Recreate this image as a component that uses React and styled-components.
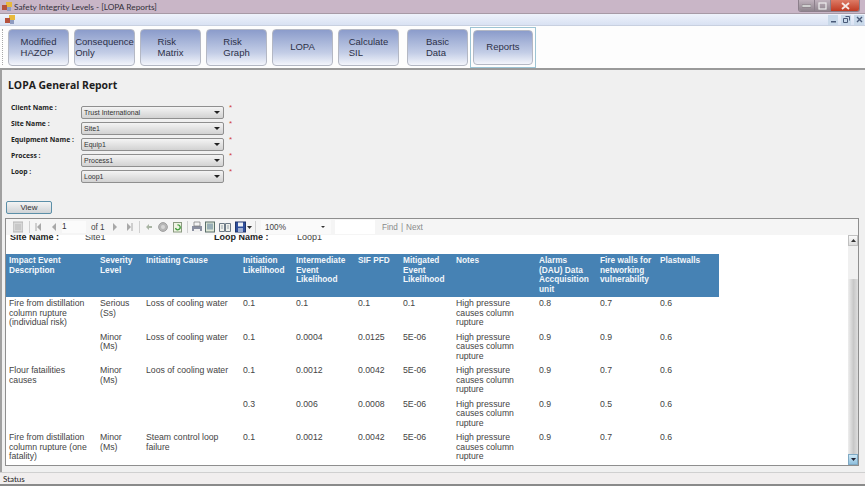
import React from 'react'
import styled, { createGlobalStyle } from 'styled-components'

const GlobalStyle = createGlobalStyle`
  html, body { margin: 0; padding: 0; background: #f0f0f0; }
  * { box-sizing: border-box; }
`

const navButtons = [
  { label: ['Modified', 'HAZOP'] },
  { label: ['Consequence', 'Only'] },
  { label: ['Risk', 'Matrix'] },
  { label: ['Risk', 'Graph'] },
  { label: ['LOPA'] },
  { label: ['Calculate', 'SIL'] },
  { label: ['Basic', 'Data'], gap: 8 },
  { label: ['Reports'], active: true, gap: 5 },
]

const fields = [
  { name: 'Client Name :', value: 'Trust International' },
  { name: 'Site Name :', value: 'Site1' },
  { name: 'Equipment Name :', value: 'Equip1' },
  { name: 'Process :', value: 'Process1' },
  { name: 'Loop :', value: 'Loop1' },
]

const columns = [
  { title: 'Impact Event Description', width: 91 },
  { title: 'Severity Level', width: 46 },
  { title: 'Initiating Cause', width: 97 },
  { title: 'Initiation Likelihood', width: 53 },
  { title: 'Intermediate Event Likelihood', width: 62 },
  { title: 'SIF PFD', width: 45 },
  { title: 'Mitigated Event Likelihood', width: 53 },
  { title: 'Notes', width: 83 },
  { title: 'Alarms (DAU) Data Accquisition unit', width: 61 },
  { title: 'Fire walls for networking vulnerability', width: 60 },
  { title: 'Plastwalls', width: 62 },
]

const notes = 'High pressure causes column rupture'

const rows = [
  ['Fire from distillation column rupture (individual risk)', 'Serious (Ss)', 'Loss of cooling water', '0.1', '0.1', '0.1', '0.1', notes, '0.8', '0.7', '0.6'],
  ['', 'Minor (Ms)', 'Loss of cooling water', '0.1', '0.0004', '0.0125', '5E-06', notes, '0.9', '0.9', '0.6'],
  ['Flour fatailities causes', 'Minor (Ms)', 'Loos of cooling water', '0.1', '0.0012', '0.0042', '5E-06', notes, '0.9', '0.7', '0.6'],
  ['', '', '', '0.3', '0.006', '0.0008', '5E-06', notes, '0.9', '0.5', '0.6'],
  ['Fire from distillation column rupture (one fatality)', 'Minor (Ms)', 'Steam control loop failure', '0.1', '0.0012', '0.0042', '5E-06', notes, '0.9', '0.7', '0.6'],
]

const AppIcon = () => (
  <svg width="10" height="9" viewBox="0 0 10 9">
    <rect x="4" y="0" width="6" height="5" fill="#e8b93c" />
    <rect x="0" y="3" width="5" height="5" fill="#b5523c" />
    <rect x="5" y="5" width="4" height="4" fill="#8f9cc0" />
  </svg>
)

const Glyph = ({ w = 10, children }) => (
  <svg width={w} height="12" viewBox={`0 0 ${w} 12`}>{children}</svg>
)

const App = () => {
  return (
    <>
      <GlobalStyle />
      <Win>
        <TitleBar>
          <AppIcon />
          <TitleText>Safety Integrity Levels - [LOPA Reports]</TitleText>
          <Caption>
            <CaptionBtn>
              <svg width="9" height="5" viewBox="0 0 9 5"><rect y="2" width="9" height="2" fill="#eee" stroke="#555" strokeWidth=".4" /></svg>
            </CaptionBtn>
            <CaptionBtn>
              <svg width="9" height="8" viewBox="0 0 9 8"><rect x="1" y="1" width="7" height="6" fill="none" stroke="#eee" strokeWidth="1.2" /></svg>
            </CaptionBtn>
            <CloseBtn>
              <svg width="9" height="8" viewBox="0 0 9 8"><path d="M1 1l7 6M8 1L1 7" stroke="#f6e8e4" strokeWidth="1.8" /></svg>
            </CloseBtn>
          </Caption>
        </TitleBar>

        <MenuStrip>
          <AppIcon />
          <MdiButtons>
            <MdiBtn><svg width="7" height="7" viewBox="0 0 7 7"><rect x="1" y="5" width="5" height="1.5" fill="#4a5a78" /></svg></MdiBtn>
            <MdiBtn><svg width="7" height="7" viewBox="0 0 7 7"><path d="M2.5.5h4v4M.5 2.5h4v4h-4z" fill="none" stroke="#4a5a78" /></svg></MdiBtn>
            <MdiBtn><svg width="7" height="7" viewBox="0 0 7 7"><path d="M1 1l5 5M6 1L1 6" stroke="#4a5a78" strokeWidth="1.4" /></svg></MdiBtn>
          </MdiButtons>
        </MenuStrip>

        <Toolbar>
          <Grip />
          {navButtons.map((b) => (
            <NavOuter key={b.label[0] + b.label.length} $active={b.active} $gap={b.gap}>
              <NavButton>
                <span>{b.label.map((l) => <NavLine key={l}>{l}</NavLine>)}</span>
              </NavButton>
            </NavOuter>
          ))}
        </Toolbar>

        <Main>
          <PageTitle>LOPA General Report</PageTitle>
          <Form>
            {fields.map((f) => (
              <FormRow key={f.name}>
                <FieldLabel>{f.name}</FieldLabel>
                <Select>
                  <span>{f.value}</span>
                  <Caret />
                </Select>
                <Required>*</Required>
              </FormRow>
            ))}
          </Form>
          <ViewButton>View</ViewButton>

          <Viewer>
            <ViewerBar>
              <ToolSlot $w={10} $ml={7}>
                <Glyph><rect x="0" y="1" width="10" height="10" fill="#d8d8d8" stroke="#b5b5b5" /><path d="M2 4h6M2 6h6M2 8h6" stroke="#b8b8b8" /></Glyph>
              </ToolSlot>
              <BarSep $ml={6} />
              <ToolSlot $w={7} $ml={5}>
                <Glyph w={7}><path d="M1 2v8" stroke="#a8a8a8" /><path d="M6 2v8L2 6z" fill="#a8a8a8" /></Glyph>
              </ToolSlot>
              <ToolSlot $w={6} $ml={9}>
                <Glyph w={6}><path d="M5 2v8L1 6z" fill="#a8a8a8" /></Glyph>
              </ToolSlot>
              <PageInput $ml={5}>1</PageInput>
              <BarText $ml={5} $w={20}>of 1</BarText>
              <ToolSlot $w={6} $ml={1}>
                <Glyph w={6}><path d="M1 2v8l4-4z" fill="#a8a8a8" /></Glyph>
              </ToolSlot>
              <ToolSlot $w={7} $ml={8}>
                <Glyph w={7}><path d="M6 2v8" stroke="#a8a8a8" /><path d="M1 2v8l4-4z" fill="#a8a8a8" /></Glyph>
              </ToolSlot>
              <BarSep $ml={6} />
              <ToolSlot $w={6} $ml={6}>
                <Glyph w={6}><path d="M0 6l3-3v2h3v2H3v2z" fill="#a9b5a4" /></Glyph>
              </ToolSlot>
              <ToolSlot $w={10} $ml={6}>
                <Glyph><circle cx="5" cy="6" r="4.4" fill="#b5b5b5" stroke="#a0a0a0" /><circle cx="5" cy="6" r="2" fill="#d5d5d5" /></Glyph>
              </ToolSlot>
              <ToolSlot $w={9} $ml={5}>
                <Glyph w={9}><rect x=".5" y="1.5" width="8" height="9.5" fill="#eef3e2" stroke="#8a9a80" /><path d="M2.5 7a2.4 2.4 0 1 0 2-3" fill="none" stroke="#3f9a3a" strokeWidth="1.3" /></Glyph>
              </ToolSlot>
              <BarSep $ml={5} />
              <ToolSlot $w={10} $ml={4}>
                <Glyph><rect x="0" y="5" width="10" height="5" fill="#8a8fa0" /><path d="M2 1h6v4H2z" fill="#f4f4f4" stroke="#777" strokeWidth=".7" /><rect x="2" y="8" width="6" height="3" fill="#f0f0f0" /></Glyph>
              </ToolSlot>
              <ToolSlot $w={10} $ml={3}>
                <Glyph><rect x=".5" y="1" width="9" height="10" fill="#dfe8d8" stroke="#5a6f6a" /><rect x="2" y="2.5" width="6" height="6" fill="#98aeb6" /></Glyph>
              </ToolSlot>
              <ToolSlot $w={12} $ml={4}>
                <Glyph w={12}><path d="M.5 2.5h5v8h-5zM6.5 2.5h5v8h-5z" fill="#eef0ec" stroke="#6d7a86" /><path d="M2 5h2M8 5h2M2 7h2M8 7h2" stroke="#9aa4ad" /></Glyph>
              </ToolSlot>
              <ToolSlot $w={11} $ml={4}>
                <Glyph w={11}><rect x=".5" y="1" width="10" height="10" fill="#2f4f9c" stroke="#20356b" /><rect x="3" y="1.5" width="5" height="4" fill="#eef1f7" /><rect x="3" y="7" width="5" height="4" fill="#9fb0d4" /></Glyph>
              </ToolSlot>
              <ToolSlot $w={5} $ml={1}>
                <Glyph w={5}><path d="M0 5h5L2.5 8z" fill="#333" /></Glyph>
              </ToolSlot>
              <BarSep $ml={3} />
              <ZoomBox>
                <span>100%</span>
                <SmallCaret />
              </ZoomBox>
              <FindBox />
              <BarText $ml={7} $w={14} $muted>Find</BarText>
              <BarText $ml={5} $w={5} $muted>|</BarText>
              <BarText $ml={0} $w={18} $muted>Next</BarText>
            </ViewerBar>

            <ViewerBody>
              <ReportScroll>
                <SiteLine>
                  <SiteKey $w={75}>Site Name :</SiteKey>
                  <SiteVal $w={129}>Site1</SiteVal>
                  <SiteKey $w={83}>Loop Name :</SiteKey>
                  <SiteVal>Loop1</SiteVal>
                </SiteLine>
                <ReportTable>
                  <colgroup>
                    {columns.map((c) => <col key={c.title} style={{ width: c.width }} />)}
                  </colgroup>
                  <thead>
                    <tr>
                      {columns.map((c) => <HeadCell key={c.title}>{c.title}</HeadCell>)}
                    </tr>
                  </thead>
                  <tbody>
                    {rows.map((row, i) => (
                      <tr key={i}>
                        {row.map((cell, j) => <BodyCell key={j}>{cell}</BodyCell>)}
                      </tr>
                    ))}
                  </tbody>
                </ReportTable>
              </ReportScroll>
              <ScrollBar>
                <ScrollBtn>
                  <svg width="5" height="3" viewBox="0 0 5 3"><path d="M0 3h5L2.5 0z" fill="#333" /></svg>
                </ScrollBtn>
                <ScrollGap />
                <ScrollThumb />
                <ScrollBtn $hot>
                  <svg width="5" height="3" viewBox="0 0 5 3"><path d="M0 0h5L2.5 3z" fill="#223" /></svg>
                </ScrollBtn>
              </ScrollBar>
            </ViewerBody>
          </Viewer>
        </Main>

        <StatusBar>Status</StatusBar>
      </Win>
    </>
  )
}

const Win = styled.div`
  width: 865px;
  height: 486px;
  display: flex;
  flex-direction: column;
  overflow: hidden;
  background: #f0f0f0;
  font-family: "Liberation Sans", Arial, sans-serif;
`

const TitleBar = styled.div`
  height: 14px;
  flex: none;
  display: flex;
  align-items: center;
  padding-left: 2px;
  background: #c9b6c7;
  border-bottom: 1px solid #a79aa6;
`

const TitleText = styled.span`
  margin-left: 2px;
  font-family: Lato, sans-serif;
  font-size: 8.3px;
  color: #33303a;
  white-space: nowrap;
`

const Caption = styled.div`
  margin-left: auto;
  margin-right: 5px;
  height: 12px;
  align-self: flex-start;
  display: flex;
  border: 1px solid #8c7f8b;
  border-top: none;
  border-radius: 0 0 3px 3px;
  overflow: hidden;
`

const CaptionBtn = styled.div`
  width: 16px;
  display: flex;
  align-items: center;
  justify-content: center;
  background: linear-gradient(#c0b2bd, #8f858e);
  border-right: 1px solid #8c7f8b;
`

const CloseBtn = styled.div`
  width: 28px;
  display: flex;
  align-items: center;
  justify-content: center;
  background: linear-gradient(#dd7b66, #c03a22);
`

const MenuStrip = styled.div`
  height: 12px;
  flex: none;
  display: flex;
  align-items: center;
  padding-left: 5px;
  background: linear-gradient(#eef2fb, #d9e2f3);
  border-bottom: 1px solid #c8d0e0;
`

const MdiButtons = styled.div`
  margin-left: auto;
  margin-right: 1px;
  display: flex;
  gap: 3px;
`

const MdiBtn = styled.div`
  width: 10px;
  height: 10px;
  display: flex;
  align-items: center;
  justify-content: center;
  background: #c9d9ea;
`

const Toolbar = styled.div`
  height: 44px;
  flex: none;
  display: flex;
  align-items: center;
  background: #fdfdfd;
  border-bottom: 2px solid #9a9a9a;
  padding-left: 2px;
`

const Grip = styled.div`
  width: 1px;
  height: 36px;
  border-left: 1px dotted #a8a8a8;
`

const NavOuter = styled.div`
  width: ${(p) => (p.$active ? '66px' : '61px')};
  height: ${(p) => (p.$active ? '41px' : '37px')};
  margin-left: ${(p) => (p.$gap ? p.$gap - (p.$active ? 3 : 0) : 5)}px;
  padding: ${(p) => (p.$active ? '2px 2px' : '0')};
  border: ${(p) => (p.$active ? '1px solid #9dc4d4' : 'none')};
  display: flex;
`

const NavButton = styled.div`
  flex: 1;
  display: flex;
  align-items: center;
  justify-content: center;
  background: linear-gradient(#8b9ccb, #c3cde6 65%, #f3f5fb);
  border: 1px solid #b4b8c4;
  border-radius: 4px;
  font-size: 9.5px;
  color: #2c3048;
`

const NavLine = styled.div`
  line-height: 11.5px;
  white-space: nowrap;
`

const Main = styled.div`
  flex: 1;
  min-height: 0;
  padding: 8px 6px 6px 5px;
  border-left: 2px solid #a0a0a0;
  display: flex;
  flex-direction: column;
  align-items: flex-start;
`

const PageTitle = styled.h1`
  margin: 0 0 13px 1px;
  font-family: "Open Sans", sans-serif;
  font-size: 10.4px;
  line-height: 15px;
  font-weight: 700;
  color: #1d1d1d;
`

const Form = styled.div`
  display: flex;
  flex-direction: column;
  gap: 3px;
  margin-left: 4px;
`

const FormRow = styled.div`
  height: 13px;
  display: flex;
  align-items: flex-start;
`

const FieldLabel = styled.div`
  width: 70px;
  margin-top: -3px;
  font-family: "Open Sans", sans-serif;
  font-weight: 700;
  font-size: 6.8px;
  line-height: 10px;
  color: #222;
  white-space: nowrap;
`

const Select = styled.div`
  width: 143px;
  height: 13px;
  display: flex;
  align-items: center;
  justify-content: space-between;
  padding: 0 3px 0 2px;
  border: 1px solid #8f8f8f;
  border-radius: 2px;
  background: linear-gradient(#f4f4f4, #d2d2d2);
  font-size: 7px;
  color: #333;
`

const Caret = styled.div`
  width: 0;
  height: 0;
  border-left: 3px solid transparent;
  border-right: 3px solid transparent;
  border-top: 3px solid #222;
`

const Required = styled.span`
  margin-left: 5px;
  margin-top: -3px;
  color: #d04040;
  font-size: 8px;
  line-height: 10px;
`

const ViewButton = styled.button`
  margin: 18px 0 4px -1px;
  width: 46px;
  height: 14px;
  padding: 0;
  border: 1px solid #5b8fa8;
  border-radius: 2px;
  background: linear-gradient(#f3f4f4, #cfd3d6);
  font-family: "Liberation Sans", sans-serif;
  font-size: 8px;
  color: #333;
`

const Viewer = styled.div`
  width: 854px;
  height: 248px;
  margin-left: -2px;
  flex: none;
  display: flex;
  flex-direction: column;
  border: 1px solid #8e8e8e;
  background: #fff;
  overflow: hidden;
`

const ViewerBar = styled.div`
  height: 16px;
  flex: none;
  position: relative;
  z-index: 1;
  display: flex;
  align-items: center;
  background: #f5f5f5;
  font-size: 8.2px;
  color: #555;
`

const ToolSlot = styled.div`
  width: ${(p) => p.$w}px;
  margin-left: ${(p) => p.$ml}px;
  flex: none;
  height: 12px;
  display: flex;
`

const BarSep = styled.div`
  width: 1px;
  height: 12px;
  flex: none;
  margin-left: ${(p) => p.$ml}px;
  background: #d0d0d0;
`

const PageInput = styled.div`
  width: 24px;
  flex: none;
  margin-left: ${(p) => p.$ml}px;
  background: #fbfbfb;
  color: #333;
  line-height: 12px;
`

const BarText = styled.span`
  width: ${(p) => p.$w}px;
  margin-left: ${(p) => p.$ml}px;
  flex: none;
  white-space: nowrap;
  color: ${(p) => (p.$muted ? '#8a8a8a' : '#444')};
`

const ZoomBox = styled.div`
  width: 70px;
  height: 14px;
  margin-left: 5px;
  flex: none;
  display: flex;
  align-items: center;
  justify-content: space-between;
  padding: 0 6px 0 4px;
  background: #fafafa;
  color: #444;
`

const SmallCaret = styled.div`
  width: 0;
  height: 0;
  border-left: 2px solid transparent;
  border-right: 2px solid transparent;
  border-top: 2px solid #333;
`

const FindBox = styled.div`
  width: 40px;
  height: 14px;
  margin-left: 4px;
  flex: none;
  background: #fff;
`

const ViewerBody = styled.div`
  flex: 1;
  min-height: 0;
  display: flex;
`

const ReportScroll = styled.div`
  flex: 1;
  min-width: 0;
  overflow: hidden;
  background: #fff;
`

const SiteLine = styled.div`
  height: 22px;
  margin-top: -3px;
  padding-left: 4px;
  display: flex;
  align-items: flex-start;
  font-size: 9px;
  line-height: 10px;
  color: #222;
`

const SiteKey = styled.span`
  width: ${(p) => p.$w}px;
  flex: none;
  font-weight: 700;
  white-space: nowrap;
`

const SiteVal = styled.span`
  width: ${(p) => (p.$w ? `${p.$w}px` : 'auto')};
  flex: none;
  color: #444;
`

const ReportTable = styled.table`
  width: 713px;
  border-collapse: collapse;
  table-layout: fixed;
  font-size: 8.7px;
  line-height: 9.7px;
`

const HeadCell = styled.th`
  height: 43px;
  padding: 2px 5px 0 3px;
  vertical-align: top;
  text-align: left;
  background: #4682b4;
  color: #f2f6fa;
  font-size: 8.3px;
  font-weight: 700;
`

const BodyCell = styled.td`
  height: 33.5px;
  padding: 2px 6px 0 3px;
  vertical-align: top;
  color: #444;
`

const ScrollBar = styled.div`
  width: 10px;
  flex: none;
  display: flex;
  flex-direction: column;
  background: #f0f0f0;
`

const ScrollBtn = styled.div`
  height: 11px;
  flex: none;
  display: flex;
  align-items: center;
  justify-content: center;
  border: 1px solid ${(p) => (p.$hot ? '#7fa9c4' : '#c0c0c0')};
  background: ${(p) => (p.$hot ? 'linear-gradient(#cfe8f5, #8fc0de)' : 'linear-gradient(#fafafa, #dcdcdc)')};
`

const ScrollGap = styled.div`
  height: 33px;
  flex: none;
`

const ScrollThumb = styled.div`
  flex: 1;
  background: linear-gradient(90deg, #eeeeee, #c8c8c8 55%, #dedede);
`

const StatusBar = styled.div`
  height: 14px;
  flex: none;
  padding: 2px 0 0 3px;
  background: #f1eeee;
  border-top: 1px solid #d0d0d0;
  border-bottom: 2px solid #8a8a8a;
  font-family: Lato, sans-serif;
  font-size: 8px;
  line-height: 9px;
  color: #222;
`

export default App
